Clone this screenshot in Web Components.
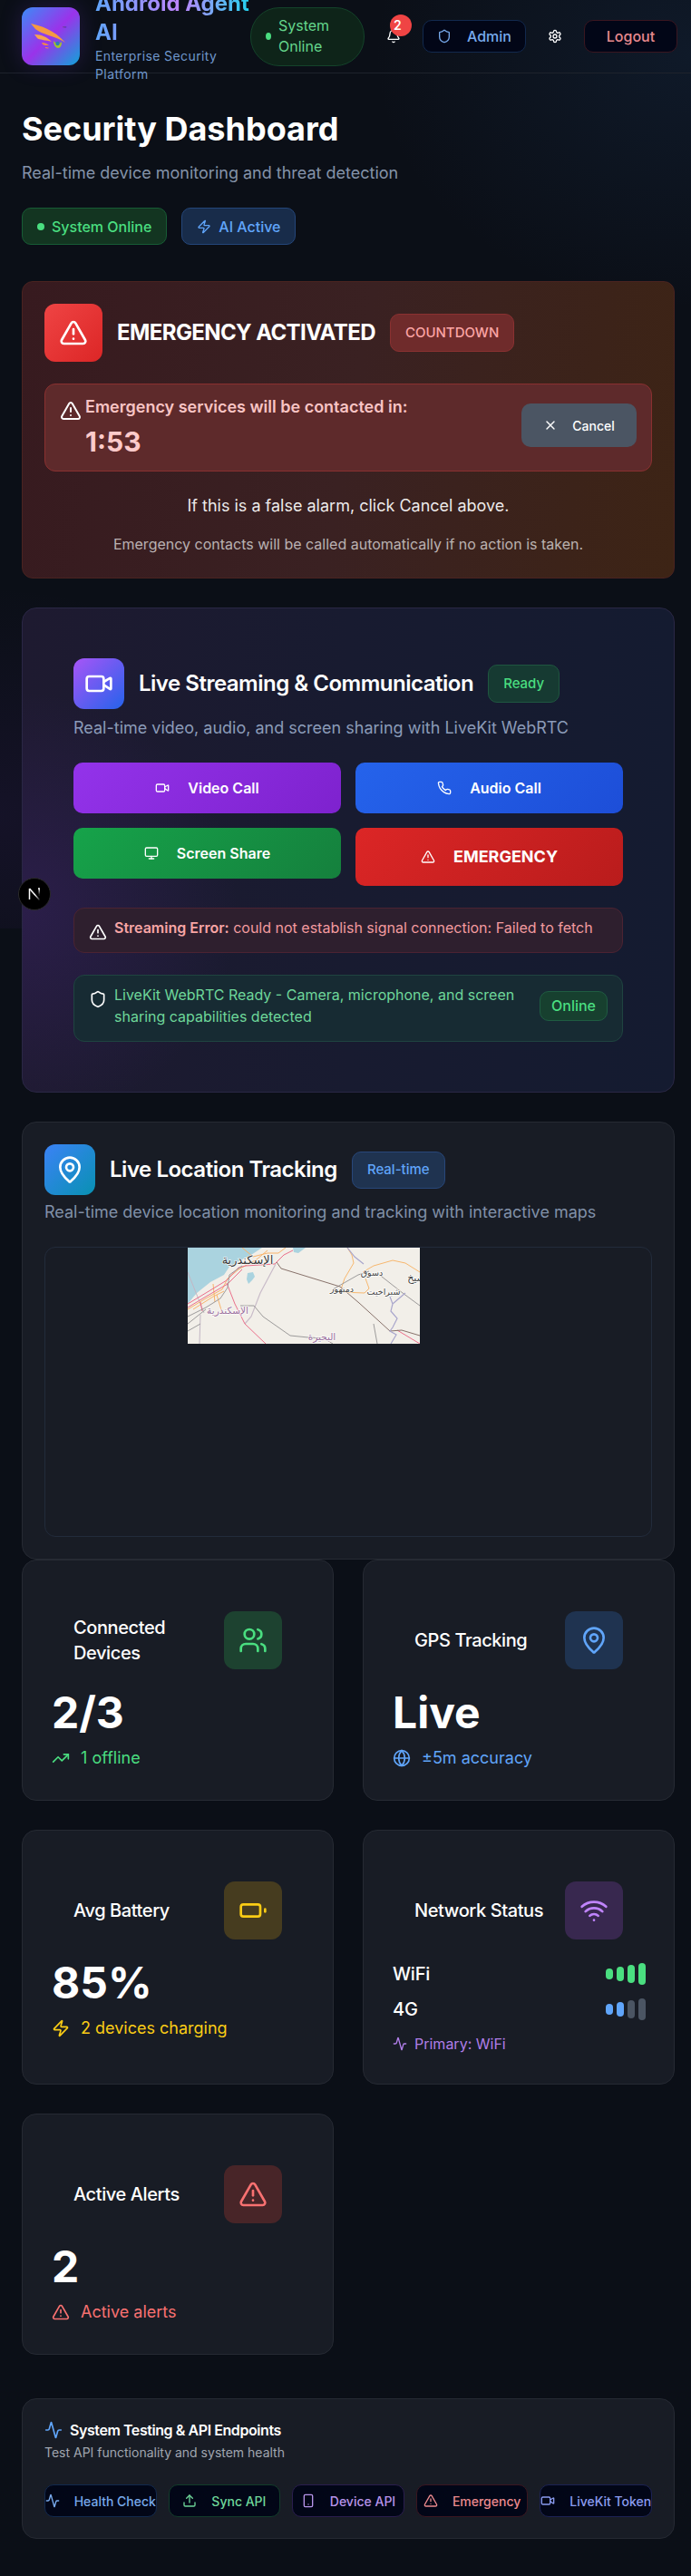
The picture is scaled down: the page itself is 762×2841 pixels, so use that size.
<!doctype html>
<html lang="en">
<head>
<meta charset="utf-8">
<title>Security Dashboard</title>
<style>
  html, body { margin: 0; padding: 0; }
  body {
    background-color: #0b0f17;
    background-image:
      radial-gradient(420px 360px at 0 900px, rgba(88, 40, 150, .13), transparent 70%),
      radial-gradient(500px 400px at 762px 60px, rgba(40, 90, 150, .14), transparent 70%);
    background-size: 100% 1024px;
    background-repeat: no-repeat;
    font-family: Inter, "Noto Sans", sans-serif;
    color: #fff;
    height: 2841px;
    overflow: hidden;
    position: relative;
  }
</style>
</head>
<body>

<top-bar></top-bar>

<main-column>
  <page-hero></page-hero>
  <emergency-card></emergency-card>
  <streaming-card></streaming-card>
  <location-card></location-card>

  <stat-grid>
    <stat-card icon="users" tint="#4ade80" wash="#1d4230" value="2/3" foot-icon="trending-up">
      <span slot="title">Connected Devices</span>
      <span slot="foot">1 offline</span>
    </stat-card>
    <stat-card icon="map-pin" tint="#60a5fa" wash="#1f3350" value="Live" foot-icon="globe">
      <span slot="title">GPS Tracking</span>
      <span slot="foot">±5m accuracy</span>
    </stat-card>
    <stat-card icon="battery" tint="#facc15" wash="#463c1f" value="85%" foot-icon="zap">
      <span slot="title">Avg Battery</span>
      <span slot="foot">2 devices charging</span>
    </stat-card>
    <network-card></network-card>
    <stat-card icon="triangle-alert" tint="#f87171" wash="#482528" value="2" foot-icon="triangle-alert">
      <span slot="title">Active Alerts</span>
      <span slot="foot">Active alerts</span>
    </stat-card>
  </stat-grid>

  <test-panel></test-panel>
</main-column>

<dev-badge></dev-badge>

<script>
  const ICONS = {
    "triangle-alert": '<path d="m21.73 18-8-14a2 2 0 0 0-3.48 0l-8 14A2 2 0 0 0 4 21h16a2 2 0 0 0 1.73-3"/><path d="M12 9v4"/><path d="M12 17h.01"/>',
    shield: '<path d="M20 13c0 5-3.5 7.5-7.66 8.95a1 1 0 0 1-.67-.01C7.5 20.5 4 18 4 13V6a1 1 0 0 1 1-1c2 0 4.5-1.2 6.24-2.72a1.17 1.17 0 0 1 1.52 0C14.51 3.81 17 5 19 5a1 1 0 0 1 1 1z"/>',
    bell: '<path d="M10.268 21a2 2 0 0 0 3.464 0"/><path d="M3.262 15.326A1 1 0 0 0 4 17h16a1 1 0 0 0 .74-1.673C19.41 13.956 18 12.499 18 8A6 6 0 0 0 6 8c0 4.499-1.411 5.956-2.738 7.326"/>',
    settings: '<path d="M12.22 2h-.44a2 2 0 0 0-2 2v.18a2 2 0 0 1-1 1.73l-.43.25a2 2 0 0 1-2 0l-.15-.08a2 2 0 0 0-2.73.73l-.22.38a2 2 0 0 0 .73 2.73l.15.1a2 2 0 0 1 1 1.72v.51a2 2 0 0 1-1 1.74l-.15.09a2 2 0 0 0-.73 2.73l.22.38a2 2 0 0 0 2.73.73l.15-.08a2 2 0 0 1 2 0l.43.25a2 2 0 0 1 1 1.73V20a2 2 0 0 0 2 2h.44a2 2 0 0 0 2-2v-.18a2 2 0 0 1 1-1.73l.43-.25a2 2 0 0 1 2 0l.15.08a2 2 0 0 0 2.73-.73l.22-.39a2 2 0 0 0-.73-2.73l-.15-.08a2 2 0 0 1-1-1.74v-.5a2 2 0 0 1 1-1.74l.15-.09a2 2 0 0 0 .73-2.73l-.22-.38a2 2 0 0 0-2.73-.73l-.15.08a2 2 0 0 1-2 0l-.43-.25a2 2 0 0 1-1-1.73V4a2 2 0 0 0-2-2z"/><circle cx="12" cy="12" r="3"/>',
    zap: '<path d="M4 14a1 1 0 0 1-.78-1.63l9.9-10.2a.5.5 0 0 1 .86.46l-1.92 6.02A1 1 0 0 0 13 10h7a1 1 0 0 1 .78 1.63l-9.9 10.2a.5.5 0 0 1-.86-.46l1.92-6.02A1 1 0 0 0 11 14z"/>',
    x: '<path d="M18 6 6 18"/><path d="m6 6 12 12"/>',
    video: '<path d="m16 13 5.223 3.482a.5.5 0 0 0 .777-.416V7.87a.5.5 0 0 0-.752-.432L16 10.5"/><rect x="2" y="6" width="14" height="12" rx="2"/>',
    phone: '<path d="M22 16.92v3a2 2 0 0 1-2.18 2 19.79 19.79 0 0 1-8.63-3.07 19.5 19.5 0 0 1-6-6 19.79 19.79 0 0 1-3.07-8.67A2 2 0 0 1 4.11 2h3a2 2 0 0 1 2 1.72 12.84 12.84 0 0 0 .7 2.81 2 2 0 0 1-.45 2.11L8.09 9.91a16 16 0 0 0 6 6l1.27-1.27a2 2 0 0 1 2.11-.45 12.84 12.84 0 0 0 2.81.7A2 2 0 0 1 22 16.92z"/>',
    monitor: '<rect width="20" height="14" x="2" y="3" rx="2"/><line x1="8" x2="16" y1="21" y2="21"/><line x1="12" x2="12" y1="17" y2="21"/>',
    "map-pin": '<path d="M20 10c0 4.993-5.539 10.193-7.399 11.799a1 1 0 0 1-1.202 0C9.539 20.193 4 14.993 4 10a8 8 0 0 1 16 0"/><circle cx="12" cy="10" r="3"/>',
    users: '<path d="M16 21v-2a4 4 0 0 0-4-4H6a4 4 0 0 0-4 4v2"/><circle cx="9" cy="7" r="4"/><path d="M22 21v-2a4 4 0 0 0-3-3.87"/><path d="M16 3.13a4 4 0 0 1 0 7.75"/>',
    "trending-up": '<polyline points="22 7 13.5 15.5 8.5 10.5 2 17"/><polyline points="16 7 22 7 22 13"/>',
    globe: '<circle cx="12" cy="12" r="10"/><path d="M12 2a14.5 14.5 0 0 0 0 20 14.5 14.5 0 0 0 0-20"/><path d="M2 12h20"/>',
    battery: '<rect width="16" height="10" x="2" y="7" rx="2" ry="2"/><line x1="22" x2="22" y1="11" y2="13"/>',
    wifi: '<path d="M12 20h.01"/><path d="M2 8.82a15 15 0 0 1 20 0"/><path d="M5 12.859a10 10 0 0 1 14 0"/><path d="M8.5 16.429a5 5 0 0 1 7 0"/>',
    activity: '<path d="M22 12h-2.48a2 2 0 0 0-1.93 1.46l-2.35 8.36a.25.25 0 0 1-.48 0L9.24 2.18a.25.25 0 0 0-.48 0l-2.35 8.36A2 2 0 0 1 4.49 12H2"/>',
    upload: '<path d="M21 15v4a2 2 0 0 1-2 2H5a2 2 0 0 1-2-2v-4"/><polyline points="17 8 12 3 7 8"/><line x1="12" x2="12" y1="3" y2="15"/>',
    smartphone: '<rect width="14" height="20" x="5" y="2" rx="2" ry="2"/><path d="M12 18h.01"/>'
  };

  class UiIcon extends HTMLElement {
    connectedCallback() {
      const size = this.getAttribute("size") || 16;
      const name = this.getAttribute("name");
      this.attachShadow({ mode: "open" }).innerHTML = `
        <style>
          :host { display: inline-flex; flex: none; width: ${size}px; height: ${size}px; }
          svg { width: 100%; height: 100%; display: block; }
        </style>
        <svg viewBox="0 0 24 24" fill="none" stroke="currentColor" stroke-width="2"
             stroke-linecap="round" stroke-linejoin="round">${ICONS[name] || ""}</svg>`;
    }
  }

  class StatusChip extends HTMLElement {
    constructor() {
      super();
      this.attachShadow({ mode: "open" }).innerHTML = `
        <style>
          :host {
            display: inline-flex; align-items: center; justify-content: center;
            gap: var(--chip-gap, 8px);
            box-sizing: border-box;
            padding: var(--chip-pad, 8px 16px);
            height: var(--chip-h, 41px);
            font-size: var(--chip-size, 15px); line-height: 24px; font-weight: 500;
            border-radius: 10px;
            border: 1px solid var(--line);
            background: var(--fill);
            color: var(--ink);
            white-space: nowrap;
          }
        </style><slot></slot>`;
    }
  }

  class TopBar extends HTMLElement {
    constructor() {
      super();
      this.attachShadow({ mode: "open" }).innerHTML = `
        <style>
          :host {
            display: flex; justify-content: space-between; align-items: center;
            box-sizing: border-box; height: 81px;
            padding: 0 18px 0 24px;
            border-bottom: 1px solid #1e232c;
          }
          .brand { display: flex; align-items: center; gap: 17px; width: 252px; flex: none; }
          .logo {
            width: 64px; height: 64px; flex: none; border-radius: 12px;
            background: linear-gradient(135deg, #3b8cf6 0%, #9a33ea 50%, #0ea5d9 100%);
            box-shadow: 0 0 24px rgba(120, 60, 220, .22);
          }
          .logo svg { display: block; }
          .words { width: 171px; flex: none; }
          h1 {
            margin: 0; font-size: 24px; line-height: 32px; font-weight: 700;
            background: linear-gradient(90deg, #60a5fa, #c084fc 55%, #22d3ee);
            -webkit-background-clip: text; background-clip: text; color: transparent;
          }
          p { margin: 0; font-size: 14px; line-height: 20px; color: #6f97cc; letter-spacing: .4px; }
          .tools { display: flex; align-items: center; gap: 16px; }
          .online {
            box-sizing: border-box; width: 126px; height: 65px;
            display: flex; align-items: center; gap: 8px;
            padding: 0 16px; border-radius: 32px;
            background: #0e2419; border: 1px solid #14432a;
            color: #64d68c; font-size: 16px; line-height: 23.5px;
          }
          .dot { width: 6px; height: 8px; border-radius: 50%; background: #4ade80; flex: none; }
          .bell { width: 32px; height: 32px; position: relative; display: flex; align-items: center; justify-content: center; color: #fff; }
          .count {
            position: absolute; left: 12px; top: -8px;
            width: 24px; height: 24px; border-radius: 50%;
            background: #ef4444; color: #fff; font-size: 14px; font-weight: 600; line-height: 24px;
            padding-left: 4px; box-sizing: border-box;
          }
          .gear { width: 32px; height: 32px; display: flex; align-items: center; justify-content: center; color: #fff; }
          .btn {
            box-sizing: border-box; height: 36px; display: flex; align-items: center; justify-content: center;
            gap: 17px; border-radius: 10px; font-size: 16px; font-weight: 500;
            background: #020617;
          }
          .admin { width: 114px; color: #77aaec; border: 1px solid #12294e; }
          .logout { width: 103px; color: #e88a8e; border: 1px solid #3a1620; }
        </style>
        <div class="brand">
          <div class="logo">
            <svg viewBox="0 0 64 64" width="64" height="64">
              <path d="M10 18 C20 20 36 25 48 39 C38 32 22 30 15 24 Z" fill="#f59a42"/>
              <path d="M14 30 C22 30 28 33 33 38 C26 36 19 36 17 34 Z" fill="#f7a350"/>
              <path d="M22 39 C25 39 28 40 30 42 C27 42 24 42 23 41 Z" fill="#f0884a"/>
              <path d="M26 44 C27 44 29 44 30 45 C29 46 27 45 26 45 Z" fill="#ee7f58"/>
              <path d="M35 37 C35 42 38 45 40 45 C43 45 44 42 44 38 C42 41 38 41 35 37 Z" fill="#a3c52c"/>
              <circle cx="39.500" cy="40" r="2.200" fill="#2b7fb8"/>
              <text x="45" y="27" font-size="7" fill="#4a3a70" font-family="Inter, sans-serif">™</text>
            </svg>
          </div>
          <div class="words">
            <h1>Android Agent AI</h1>
            <p>Enterprise Security Platform</p>
          </div>
        </div>
        <div class="tools">
          <div class="online"><span class="dot"></span><span>System Online</span></div>
          <div class="bell"><ui-icon name="bell" size="16"></ui-icon><span class="count">2</span></div>
          <div class="btn admin"><ui-icon name="shield" size="16"></ui-icon><span>Admin</span></div>
          <div class="gear"><ui-icon name="settings" size="16"></ui-icon></div>
          <div class="btn logout"><span>Logout</span></div>
        </div>`;
    }
  }

  class MainColumn extends HTMLElement {
    constructor() {
      super();
      this.attachShadow({ mode: "open" }).innerHTML = `
        <style>
          :host { display: block; padding: 41px 18px 0 24px; }
        </style><slot></slot>`;
    }
  }

  class PageHero extends HTMLElement {
    constructor() {
      super();
      this.attachShadow({ mode: "open" }).innerHTML = `
        <style>
          :host { display: block; margin-bottom: 40px; }
          h2 { margin: 0; font-size: 36px; line-height: 40px; font-weight: 700; color: #fff; }
          p { margin: 15px 0 24px; font-size: 18px; line-height: 28px; color: #8493a9; }
          .row { display: flex; gap: 16px; }
          .dot { width: 8px; height: 8px; border-radius: 50%; background: #4ade80; }
          .green { --line: #175c35; --fill: #133521; --ink: #4ade80; --chip-size: 16px; }
          .blue { --line: #24467a; --fill: #182c4a; --ink: #60a5fa; --chip-size: 16px; }
        </style>
        <h2>Security Dashboard</h2>
        <p>Real-time device monitoring and threat detection</p>
        <div class="row">
          <status-chip class="green"><span class="dot"></span>System Online</status-chip>
          <status-chip class="blue"><ui-icon name="zap" size="16"></ui-icon>AI Active</status-chip>
        </div>`;
    }
  }

  class EmergencyCard extends HTMLElement {
    constructor() {
      super();
      this.attachShadow({ mode: "open" }).innerHTML = `
        <style>
          :host {
            display: block; box-sizing: border-box; height: 328px; margin-bottom: 32px;
            padding: 24px; border-radius: 12px;
            background: linear-gradient(100deg, #371a1f 0%, #3a2122 50%, #3d2415 100%);
            border: 1px solid #4a2320;
          }
          .head { display: flex; align-items: center; gap: 16px; margin-bottom: 24px; }
          .badge-icon {
            width: 64px; height: 64px; border-radius: 12px; color: #fff;
            display: flex; align-items: center; justify-content: center;
            background: linear-gradient(135deg, #ef4444, #dc2626);
          }
          h3 { margin: 0; font-size: 24px; line-height: 32px; font-weight: 700; color: #fff; letter-spacing: -.6px; }
          .pill { --line: #8a3131; --fill: #6f2b2b; --ink: #fca5a5; --chip-h: 42px; }
          .box {
            display: flex; align-items: center; justify-content: space-between;
            box-sizing: border-box; height: 97px; padding: 0 16px;
            border-radius: 12px; background: #5e2a2b; border: 1px solid #8a3030;
          }
          .left { display: flex; gap: 4px; margin-top: -4px; align-items: flex-start; }
          .left ui-icon { color: #fff; margin-top: 6px; }
          .msg { font-size: 18px; line-height: 28px; font-weight: 600; color: #f9c4c4; }
          .time { font-size: 30px; line-height: 36px; font-weight: 700; color: #fecaca; margin-top: 6px; }
          .cancel {
            width: 127px; height: 48px; border-radius: 10px; background: #4b5563; color: #fff;
            display: flex; align-items: center; justify-content: center; gap: 16px;
            font-size: 14px; font-weight: 500; margin-top: -5px;
          }
          .note { text-align: center; margin: 24px 0 0; font-size: 18px; line-height: 28px; color: rgba(255,255,255,.92); }
          .fine { text-align: center; margin: 16px 0 0; font-size: 16px; line-height: 24px; color: rgba(255,255,255,.66); }
        </style>
        <div class="head">
          <div class="badge-icon"><ui-icon name="triangle-alert" size="32"></ui-icon></div>
          <h3>EMERGENCY ACTIVATED</h3>
          <status-chip class="pill">COUNTDOWN</status-chip>
        </div>
        <div class="box">
          <div class="left">
            <ui-icon name="triangle-alert" size="24"></ui-icon>
            <div>
              <div class="msg">Emergency services will be contacted in:</div>
              <div class="time">1:53</div>
            </div>
          </div>
          <div class="cancel"><ui-icon name="x" size="16"></ui-icon><span>Cancel</span></div>
        </div>
        <p class="note">If this is a false alarm, click Cancel above.</p>
        <p class="fine">Emergency contacts will be called automatically if no action is taken.</p>`;
    }
  }

  class ActionButton extends HTMLElement {
    constructor() {
      super();
      this.attachShadow({ mode: "open" }).innerHTML = `
        <style>
          :host {
            display: flex; align-items: center; justify-content: center; gap: 20px;
            box-sizing: border-box; height: 56px; border-radius: 10px; color: #fff;
            font-size: 16px; line-height: 24px; font-weight: 600;
            background: var(--paint);
          }
        </style><slot></slot>`;
    }
  }

  class StreamingCard extends HTMLElement {
    constructor() {
      super();
      this.attachShadow({ mode: "open" }).innerHTML = `
        <style>
          :host {
            display: block; box-sizing: border-box; height: 535px; margin-bottom: 32px;
            padding: 56px 56px 0; border-radius: 16px;
            background:
              radial-gradient(340px 340px at 0 62%, rgba(95, 45, 175, .2), transparent 70%),
              linear-gradient(90deg, #1e1a30 0%, #181b30 50%, #141b30 100%);
            border: 1px solid #2a2745;
          }
          .head { display: flex; align-items: center; gap: 16px; margin: -1px 0 7px; }
          .tile {
            width: 56px; height: 56px; border-radius: 12px; color: #fff;
            display: flex; align-items: center; justify-content: center;
            background: linear-gradient(135deg, #a855f7, #2563eb);
          }
          h3 { margin: 0; font-size: 24px; line-height: 32px; font-weight: 600; color: #fff; letter-spacing: -.49px; }
          .ready { --line: #1f5640; --fill: #163a32; --ink: #4ade80; --chip-h: 42px; }
          .sub { margin: 0 0 24px; font-size: 18px; line-height: 28px; color: #8b9bb8; }
          .grid { display: grid; grid-template-columns: 1fr 1fr; gap: 16px; align-items: start; margin-bottom: 24px; }
          .sos { height: 64px; font-size: 18px; font-weight: 700; }
          .note {
            display: grid; grid-template-columns: 20px 1fr; column-gap: 8px;
            box-sizing: border-box; padding: 12px 16px; border-radius: 12px; font-size: 16px; line-height: 24px;
          }
          .note ui-icon { color: #fff; margin-top: 4px; }
          .err { background: #2e1f2e; border: 1px solid #4b2332; color: #f29a9f; margin-bottom: 24px; }
          .err b { font-weight: 600; color: #f8a5a5; }
          .err div { margin: -3px 0 3px; white-space: nowrap; }
          .ok { background: #172b33; border: 1px solid #1f4440; color: #6ed79a; }
          .ok .line { display: flex; align-items: center; justify-content: space-between; gap: 24px; margin: -3px 0 3px; }
          .on { --line: #1f5c42; --fill: #17402f; --ink: #4ade80; --chip-h: 33px; --chip-pad: 0 12px; --chip-size: 16px; }
        </style>
        <div class="head">
          <div class="tile"><ui-icon name="video" size="32"></ui-icon></div>
          <h3>Live Streaming &amp; Communication</h3>
          <status-chip class="ready">Ready</status-chip>
        </div>
        <p class="sub">Real-time video, audio, and screen sharing with LiveKit WebRTC</p>
        <div class="grid">
          <action-button style="--paint: linear-gradient(135deg,#9333ea,#7e22ce)"><ui-icon name="video" size="16"></ui-icon>Video Call</action-button>
          <action-button style="--paint: linear-gradient(135deg,#2563eb,#1d4ed8)"><ui-icon name="phone" size="16"></ui-icon>Audio Call</action-button>
          <action-button style="--paint: linear-gradient(135deg,#16a34a,#15803d)"><ui-icon name="monitor" size="16"></ui-icon>Screen Share</action-button>
          <action-button class="sos" style="--paint: linear-gradient(135deg,#dc2626,#b91c1c)"><ui-icon name="triangle-alert" size="16"></ui-icon>EMERGENCY</action-button>
        </div>
        <div class="note err">
          <ui-icon name="triangle-alert" size="20"></ui-icon>
          <div><b>Streaming Error:</b> could not establish signal connection: Failed to fetch</div>
        </div>
        <div class="note ok">
          <ui-icon name="shield" size="20"></ui-icon>
          <div class="line">
            <span>LiveKit WebRTC Ready - Camera, microphone, and screen sharing capabilities detected</span>
            <status-chip class="on">Online</status-chip>
          </div>
        </div>`;
    }
  }

  class MapTile extends HTMLElement {
    constructor() {
      super();
      this.attachShadow({ mode: "open" }).innerHTML = `
        <style>
          :host { display: block; width: 256px; height: 106px; overflow: hidden; }
          svg { display: block; }
          text { font-family: "DejaVu Sans", sans-serif; text-anchor: middle; paint-order: stroke; stroke: rgba(255,255,255,.75); stroke-width: 1.500px; }
        </style>
        <svg viewBox="0 0 256 106" width="256" height="106" fill="none">
          <rect width="256" height="106" fill="#f2efe9"/>
          <path d="M0 0H82L70 8 56 15 46 21 40 30 25 38 10 50 0 62Z" fill="#aad3df"/>
          <path d="M66 28l6 -1 2 5 -3 4 -4 4 -2-5zM116 0h14l-8 6-5-1z" fill="#aad3df"/>
          <path d="M0 27L18 72 M13 106L14 74" stroke="#c2b6c4" stroke-width="1"/>
          <path d="M97 18L80 50 70 76 63 84" stroke="#c9bcc9" stroke-width="1.200"/>
          <path d="M176 0L181 8 183 17 173 34 169 46 M169 49L195 50 200 45 196 34 M193 27L205 20 226 14 240 17 256 27" stroke="#f7b76e" stroke-width="1"/>
          <path d="M0 68L20 56 38 46 44 34 56 24 76 13 88 3 M6 68L28 54 40 48 M28 40L30 60 M32 52L38 72 M60 0L72 10 88 6 100 6 M108 0L100 6" stroke="#f8b36a" stroke-width="1"/>
          <path d="M0 62L20 50 43 36 56 22 64 20 96 18 106 8 116 3 M0 66L20 54 44 40 60 24 M43 39L52 62 63 84 86 106 M231 91L256 106 M14 60L16 70" stroke="#ea6f8a" stroke-width="1"/>
          <path d="M0 76L20 66 36 56 44 44 46 30 60 20 M0 84L20 68 M0 92L14 84 M58 64L73 64 83 76 113 97 133 99 150 100 160 106 M209 28L237 50 256 64 M209 106L205 84 M160 46L188 30 200 26" stroke="#9c9a9a" stroke-width="1"/>
          <path d="M98 16L103 23 168 43 189 61 223 92 236 91 256 97" stroke="#87716a" stroke-width="1"/>
          <path d="M176 0L184 10 194 18 M223 54L226 62 224 70 231 78 226 88 223 92 230 96 224 106 M240 50L226 62" stroke="#a9a6cc" stroke-width="1.200"/>
          <text x="66" y="18" font-size="13" fill="#3a3a3a">الإسكندرية</text>
          <text x="44" y="73" font-size="10.500" fill="#9b6f9f">الإسكندرية</text>
          <text x="170" y="49" font-size="9.500" fill="#444">دمنهور</text>
          <text x="203" y="31" font-size="9.500" fill="#444">دسوق</text>
          <text x="216" y="52" font-size="9.500" fill="#444">شبراخيت</text>
          <text x="148" y="102" font-size="10.500" fill="#9b6f9f">البحيرة</text>
          <text x="252" y="37" font-size="11" fill="#444">شيخ</text>
        </svg>`;
    }
  }

  class LocationCard extends HTMLElement {
    constructor() {
      super();
      this.attachShadow({ mode: "open" }).innerHTML = `
        <style>
          :host {
            display: block; box-sizing: border-box; height: 483px;
            padding: 24px; border-radius: 16px; background: #181c25; border: 1px solid #262a33;
          }
          .head { display: flex; align-items: center; gap: 16px; margin-bottom: 5px; }
          .tile {
            width: 56px; height: 56px; border-radius: 12px; color: #fff;
            display: flex; align-items: center; justify-content: center;
            background: linear-gradient(135deg, #3b82f6, #0891b2);
          }
          h3 { margin: 0; font-size: 24px; line-height: 32px; font-weight: 600; color: #fff; letter-spacing: -.47px; }
          .live { --line: #28477a; --fill: #1f3350; --ink: #60a5fa; --chip-h: 41px; }
          .sub { margin: 0 0 24px; font-size: 18px; line-height: 28px; color: #8090a8; }
          .map {
            box-sizing: border-box; height: 320px; border-radius: 12px; border: 1px solid #222b3b;
            overflow: hidden;
          }
          map-tile { margin-left: 157px; }
        </style>
        <div class="head">
          <div class="tile"><ui-icon name="map-pin" size="32"></ui-icon></div>
          <h3>Live Location Tracking</h3>
          <status-chip class="live">Real-time</status-chip>
        </div>
        <p class="sub">Real-time device location monitoring and tracking with interactive maps</p>
        <div class="map"><map-tile></map-tile></div>`;
    }
  }

  class StatGrid extends HTMLElement {
    constructor() {
      super();
      this.attachShadow({ mode: "open" }).innerHTML = `
        <style>
          :host { display: grid; grid-template-columns: 1fr 1fr; gap: 32px; margin-bottom: 48px; }
        </style><slot></slot>`;
    }
  }

  const STAT_BOX_CSS = `
    :host {
      display: block; box-sizing: border-box; padding: 32px;
      border-radius: 16px; background: #181c25; border: 1px solid #262a33;
    }
    .head { display: flex; align-items: center; justify-content: space-between; gap: 16px; padding: 24px; }
    .name { font-size: 20px; line-height: 28px; font-weight: 500; color: #fff; letter-spacing: -.4px; }
    .tile {
      width: 64px; height: 64px; border-radius: 12px; flex: none;
      display: flex; align-items: center; justify-content: center;
    }`;

  class StatCard extends HTMLElement {
    connectedCallback() {
      const tint = this.getAttribute("tint");
      const wash = this.getAttribute("wash");
      this.attachShadow({ mode: "open" }).innerHTML = `
        <style>
          ${STAT_BOX_CSS}
          .value { font-size: 48px; line-height: 48px; font-weight: 700; color: #fff; }
          .foot { display: flex; align-items: center; gap: 12px; margin-top: 12px; font-size: 18px; line-height: 28px; color: ${tint}; }
        </style>
        <div class="head">
          <div class="name"><slot name="title"></slot></div>
          <div class="tile" style="background:${wash};color:${tint}"><ui-icon name="${this.getAttribute("icon")}" size="32"></ui-icon></div>
        </div>
        <div class="value">${this.getAttribute("value")}</div>
        <div class="foot"><ui-icon name="${this.getAttribute("foot-icon")}" size="20"></ui-icon><slot name="foot"></slot></div>`;
    }
  }

  class SignalBars extends HTMLElement {
    connectedCallback() {
      const on = Number(this.getAttribute("on"));
      const tint = this.getAttribute("tint");
      const bars = [12, 16, 20, 24].map((h, i) =>
        `<i style="height:${h}px;background:${i < on ? tint : "#4b5563"}"></i>`).join("");
      this.attachShadow({ mode: "open" }).innerHTML = `
        <style>
          :host { display: flex; align-items: center; gap: 4px; }
          i { display: block; width: 8px; border-radius: 4px; }
        </style>${bars}`;
    }
  }

  class NetworkCard extends HTMLElement {
    constructor() {
      super();
      this.attachShadow({ mode: "open" }).innerHTML = `
        <style>
          ${STAT_BOX_CSS}
          .row { display: flex; align-items: center; justify-content: space-between; height: 27.5px; margin-bottom: 12px; font-size: 20px; letter-spacing: -.2px; font-weight: 500; color: #fff; }
          .row signal-bars { margin-right: -1px; }
          .primary { display: flex; align-items: center; gap: 8px; font-size: 16px; line-height: 24px; color: #b07ee8; }
        </style>
        <div class="head">
          <div class="name">Network Status</div>
          <div class="tile" style="background:#38284f;color:#c084fc"><ui-icon name="wifi" size="32"></ui-icon></div>
        </div>
        <div class="row"><span>WiFi</span><signal-bars on="4" tint="#4ade80"></signal-bars></div>
        <div class="row"><span>4G</span><signal-bars on="2" tint="#60a5fa"></signal-bars></div>
        <div class="primary"><ui-icon name="activity" size="16"></ui-icon><span>Primary: WiFi</span></div>`;
    }
  }

  class TestButton extends HTMLElement {
    connectedCallback() {
      this.attachShadow({ mode: "open" }).innerHTML = `
        <style>
          :host {
            display: flex; align-items: center; justify-content: center; gap: 16px;
            box-sizing: border-box; height: 36px; min-width: 0; border-radius: 10px;
            background: #020617; white-space: nowrap; overflow: hidden;
            font-size: 14px; font-weight: 500;
            color: ${this.getAttribute("ink")}; border: 1px solid ${this.getAttribute("line")};
          }
        </style>
        <ui-icon name="${this.getAttribute("icon")}" size="16"></ui-icon><slot></slot>`;
    }
  }

  class TestPanel extends HTMLElement {
    constructor() {
      super();
      this.attachShadow({ mode: "open" }).innerHTML = `
        <style>
          :host {
            display: block; box-sizing: border-box; height: 155px; padding: 24px;
            border-radius: 16px; background: #181c25; border: 1px solid #262a33;
          }
          .title { display: flex; align-items: center; gap: 8px; margin-top: -2px; font-size: 16px; line-height: 24px; font-weight: 600; color: #fff; letter-spacing: -.43px; }
          .title ui-icon { color: #60a5fa; }
          p { margin: 3px 0 25px; font-size: 14px; line-height: 20px; color: #a0a6b0; }
          .row { display: grid; grid-template-columns: repeat(5, 1fr); gap: 13px; }
        </style>
        <div class="title"><ui-icon name="activity" size="20"></ui-icon><span>System Testing &amp; API Endpoints</span></div>
        <p>Test API functionality and system health</p>
        <div class="row">
          <test-button icon="activity" ink="#78aaec" line="#12294e">Health Check</test-button>
          <test-button icon="upload" ink="#6ed79a" line="#123c2a">Sync API</test-button>
          <test-button icon="smartphone" ink="#b794ea" line="#2a1d4e">Device API</test-button>
          <test-button icon="triangle-alert" ink="#ec8a8e" line="#3a1620">Emergency</test-button>
          <test-button icon="video" ink="#8b9cf0" line="#1c2254">LiveKit Token</test-button>
        </div>`;
    }
  }

  class DevBadge extends HTMLElement {
    constructor() {
      super();
      this.attachShadow({ mode: "open" }).innerHTML = `
        <style>
          :host {
            position: absolute; left: 20px; top: 968px;
            width: 36px; height: 36px; border-radius: 50%; box-sizing: border-box;
            background: #000; border: 1px solid #2b2b2b;
            display: flex; align-items: center; justify-content: center;
          }
          svg { display: block; }
        </style>
        <svg viewBox="0 0 14 14" width="14" height="14" fill="none" stroke-width="1.500">
          <defs>
            <linearGradient id="fade-a" x1="0" y1="0" x2="1" y2="1"><stop offset=".55" stop-color="#fff"/><stop offset="1" stop-color="#fff" stop-opacity=".15"/></linearGradient>
            <linearGradient id="fade-b" x1="0" y1="0" x2="0" y2="1"><stop offset="0" stop-color="#fff"/><stop offset=".8" stop-color="#fff" stop-opacity=".1"/></linearGradient>
          </defs>
          <path d="M1.500 13V1" stroke="#fff"/>
          <path d="M1.500 1L12.500 13.500" stroke="url(#fade-a)"/>
          <path d="M11 1H12.200V9" stroke="url(#fade-b)"/>
        </svg>`;
    }
  }

  customElements.define("ui-icon", UiIcon);
  customElements.define("status-chip", StatusChip);
  customElements.define("top-bar", TopBar);
  customElements.define("main-column", MainColumn);
  customElements.define("page-hero", PageHero);
  customElements.define("emergency-card", EmergencyCard);
  customElements.define("action-button", ActionButton);
  customElements.define("streaming-card", StreamingCard);
  customElements.define("map-tile", MapTile);
  customElements.define("location-card", LocationCard);
  customElements.define("stat-grid", StatGrid);
  customElements.define("stat-card", StatCard);
  customElements.define("signal-bars", SignalBars);
  customElements.define("network-card", NetworkCard);
  customElements.define("test-button", TestButton);
  customElements.define("test-panel", TestPanel);
  customElements.define("dev-badge", DevBadge);
</script>
</body>
</html>
